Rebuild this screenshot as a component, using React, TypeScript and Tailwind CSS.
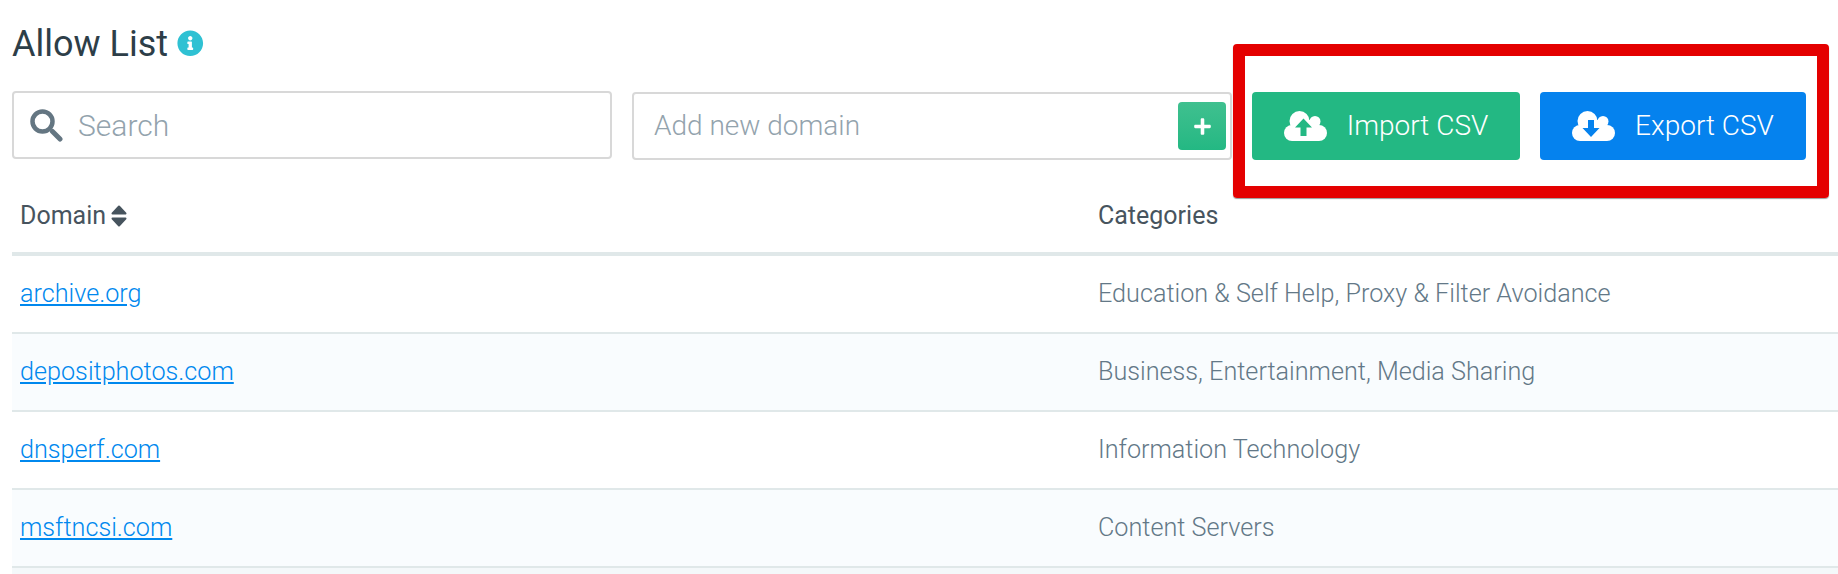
import React from 'react';
import { FaInfoCircle, FaPlus } from 'react-icons/fa';

const rows = [
  { domain: 'archive.org', categories: 'Education & Self Help, Proxy & Filter Avoidance' },
  { domain: 'depositphotos.com', categories: 'Business, Entertainment, Media Sharing' },
  { domain: 'dnsperf.com', categories: 'Information Technology' },
  { domain: 'msftncsi.com', categories: 'Content Servers' },
];

const SearchIcon = () => (
  <svg width="33" height="33" viewBox="0 0 33 33" className="shrink-0">
    <circle cx="12.5" cy="12.5" r="10" fill="none" stroke="#647682" strokeWidth="4.5" />
    <path d="M22.5 22.5L30 30" fill="none" stroke="#647682" strokeWidth="5" strokeLinecap="round" />
  </svg>
);

const SortIcon = () => (
  <svg width="16" height="22" viewBox="0 0 16 22" className="ml-[5px]" fill="#47545e" stroke="#47545e" strokeWidth="2" strokeLinejoin="round">
    <path d="M8 1.5L14.5 8.5H1.5Z" />
    <path d="M8 20.5L14.5 13.5H1.5Z" />
  </svg>
);

// cloud with a cut-out arrow, arrow colour follows the button
const CloudIcon: React.FC<{ arrow: string; color: string }> = ({ arrow, color }) => (
  <svg width="43" height="30" viewBox="0 0 43 30" className="shrink-0">
    <g fill="#fff">
      <circle cx="15.5" cy="10" r="10" />
      <circle cx="31" cy="10.5" r="5.5" />
      <circle cx="8" cy="22" r="8" />
      <circle cx="35" cy="22" r="8" />
      <rect x="8" y="9" width="27" height="21" />
    </g>
    <path d={arrow} fill={color} />
  </svg>
);

const App: React.FC = () => {
  return (
    <div className="relative h-[574px] overflow-hidden bg-white pl-3 font-['Roboto',sans-serif]">
      <div className="flex h-[91px] items-start pt-[25px]">
        <h1 className="text-[36px] leading-[38px] font-normal text-[#2d3e48]">Allow List</h1>
        <FaInfoCircle className="mt-[5px] ml-[9px] text-[26.5px] text-[#2fc1d3]" />
      </div>

      <div className="flex items-start">
        <div className="flex h-[68px] w-[600px] items-center rounded border-2 border-[#d8d8d8] pl-[16px]">
          <SearchIcon />
          <span className="mt-[1px] ml-[15px] text-[30px] font-light text-[#93a3ad]">Search</span>
        </div>
        <div className="mt-[1px] ml-[20px] flex h-[68px] w-[600px] items-center justify-between rounded border-2 border-[#d8d8d8] pr-[4px] pl-[20px]">
          <span className="text-[28px] font-light text-[#93a3ad]">Add new domain</span>
          <button className="flex h-[48px] w-[48px] items-center justify-center rounded bg-gradient-to-b from-[#3fc08f] to-[#23b883] text-white">
            <FaPlus className="text-[19px]" />
          </button>
        </div>
        <button className="mt-[1px] ml-[20px] flex h-[68px] w-[268px] items-center justify-center rounded bg-[#23b883] text-white">
          <CloudIcon color="#23b883" arrow="M19.5 7.5L28 16.5H22.5V25H16.5V16.5H11Z" />
          <span className="ml-[20px] text-[28px] font-light">Import CSV</span>
        </button>
        <button className="mt-[1px] ml-[20px] flex h-[68px] w-[266px] items-center justify-center rounded bg-[#0582ee] text-white">
          <CloudIcon color="#0582ee" arrow="M19 26L10.5 17H16V9H22V17H27.5Z" />
          <span className="ml-[20px] text-[28px] font-light">Export CSV</span>
        </button>
      </div>

      <div>
        <div className="grid h-[96px] grid-cols-[1078px_1fr] items-center border-b-4 border-[#e0e8e9] pt-[20px] text-[25px] text-[#47545e]">
          <div className="flex items-center pl-2">
            Domain
            <SortIcon />
          </div>
          <div className="pl-2">Categories</div>
        </div>
        {rows.map((row, i) => (
          <div
            key={row.domain}
            className={`grid h-[78px] grid-cols-[1078px_1fr] items-center border-b-2 border-[#e0e8e9] text-[25.2px] font-light ${i % 2 === 1 ? 'bg-[#f9fcfe]' : 'bg-white'}`}
          >
            <div className="pl-2">
              <a href="#" className="text-[#0088ee] underline">{row.domain}</a>
            </div>
            <div className="pl-2 text-[#637887]">{row.categories}</div>
          </div>
        ))}
        <div className="h-[10px] bg-[#f4f8fa]" />
      </div>

      <div className="pointer-events-none absolute top-[44px] left-[1233px] h-[154px] w-[596px] rounded border-12 border-[#e40000] shadow-[0_1px_1px_rgba(0,0,0,0.4)]" />
    </div>
  );
};

export default App;
